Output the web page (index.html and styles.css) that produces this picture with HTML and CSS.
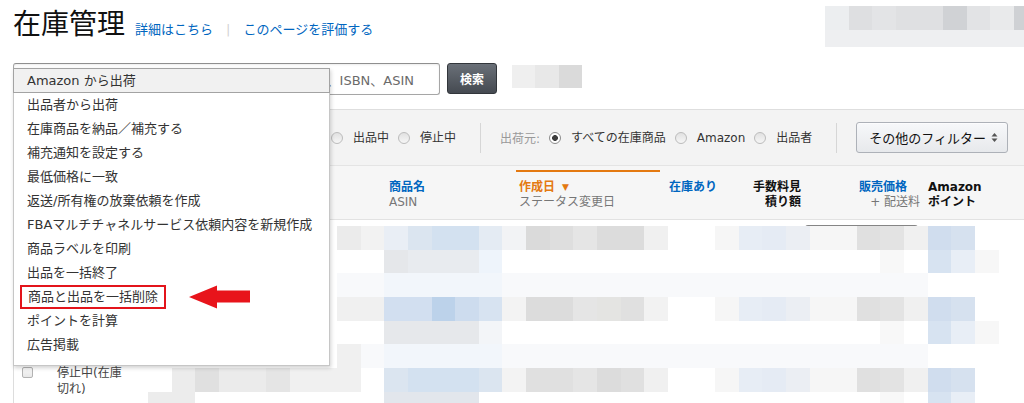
FILE: index.html
```html
<!DOCTYPE html>
<html lang="ja">
<head>
<meta charset="utf-8">
<title>在庫管理</title>
<link rel="stylesheet" href="styles.css">
</head>
<body>
<div class="page">
  <header class="top">
    <div class="title-group">
      <h1 class="title">在庫管理</h1>
      <a class="title-link first" href="#">詳細はこちら</a>
      <span class="title-sep">|</span>
      <a class="title-link" href="#">このページを評価する</a>
    </div>
    <div class="mosaic mosaic-top" data-cols="9" data-rows="MNOPPQRST|UUUUUUUUU"></div>
  </header>

  <div class="search-row">
    <div class="search-box"><span>、ISBN、ASIN</span></div>
    <button class="search-btn" type="button">検索</button>
    <div class="mosaic mosaic-search" data-cols="3" data-rows="VWh"></div>
  </div>

  <section class="inventory">
    <div class="filters">
      <div class="filter-lead">
        <span class="radio on"></span>
      </div>
      <label class="opt"><span class="radio"></span>出品中</label>
      <label class="opt"><span class="radio"></span>停止中</label>
      <span class="vsep"></span>
      <span class="filter-label">出荷元:</span>
      <label class="opt"><span class="radio on"></span>すべての在庫商品</label>
      <label class="opt"><span class="radio"></span>Amazon</label>
      <label class="opt"><span class="radio"></span>出品者</label>
      <span class="vsep"></span>
      <button class="more-btn" type="button">その他のフィルター<svg class="updown" width="7" height="11" viewBox="0 0 7 11"><polygon points="0.5,4.5 3.5,1 6.5,4.5"/><polygon points="0.5,6.5 3.5,10 6.5,6.5"/></svg></button>
    </div>

    <div class="thead">
      <div class="th"><span class="checkbox"></span></div>
      <div class="th"></div>
      <div class="th"></div>
      <div class="th"><div class="strong-link">商品名</div><div class="sub">ASIN</div></div>
      <div class="th sorted"><div class="sort-head">作成日<span class="caret">▼</span></div><div class="sub">ステータス変更日</div></div>
      <div class="th"><div class="strong-link">在庫あり</div></div>
      <div class="th th-fee"><div class="fee">手数料見積り額</div></div>
      <div class="th th-price"><div class="strong-link price-head">販売価格</div><div class="sub">+ 配送料</div></div>
      <div class="th th-points"><div class="strong">Amazon</div><div class="strong">ポイント</div></div>
    </div>

    <div class="tbody">
      <div class="trow">
        <div class="td td-check"><span class="checkbox"></span></div>
        <div class="td td-price"><div class="price-input"></div></div>
      </div>
      <div class="trow">
        <div class="td td-check"><span class="checkbox"></span></div>
      </div>
      <div class="trow">
        <div class="td td-check"><span class="checkbox"></span></div>
        <div class="td td-status">停止中(在庫切れ)</div>
      </div>
      <div class="mosaic mosaic-body" data-cols="37" data-rows="........abcdeefghijkkl..mnopmmqrlst..|..........uvvvw................x.yzL.|........AABBBBBAAAAAAAAAAAAAAAAAA....|........llCCDEyFkkjGqb..mnopmmqrlst..|..........HHHHI................x.yzL.|........lABBBBBAAAAAAAAAAAAAAAAAA....|.Kqaajlll.deeedFqqjkql..mnopmmqrlst..|KK........JJJJ.................x.yz.."></div>
    </div>
  </section>

  <ul class="menu">
    <li class="menu-item active">Amazon から出荷</li>
    <li class="menu-item">出品者から出荷</li>
    <li class="menu-item">在庫商品を納品／補充する</li>
    <li class="menu-item">補充通知を設定する</li>
    <li class="menu-item">最低価格に一致</li>
    <li class="menu-item">返送/所有権の放棄依頼を作成</li>
    <li class="menu-item">FBAマルチチャネルサービス依頼内容を新規作成</li>
    <li class="menu-item">商品ラベルを印刷</li>
    <li class="menu-item">出品を一括終了</li>
    <li class="menu-item marked"><span class="annot">商品と出品を一括削除</span><svg class="arrow" width="62" height="24" viewBox="0 0 62 24"><polygon points="0,12 28,0.5 28,5.5 61,5.5 61,17.5 28,17.5 28,23.5"/></svg></li>
    <li class="menu-item">ポイントを計算</li>
    <li class="menu-item">広告掲載</li>
  </ul>
</div>
<script src="mosaic.js"></script>
</body>
</html>
```

FILE: styles.css
```css
* { box-sizing: border-box; }
html, body { margin: 0; padding: 0; }
body {
  font-family: "DejaVu Sans", "Noto Sans CJK JP", sans-serif;
  color: #333;
  background: #fff;
}
.page {
  position: relative;
  width: 1024px;
  height: 403px;
  overflow: hidden;
  padding-left: 13px;
}

/* header */
.top { height: 63px; display: flex; align-items: flex-start; }
.title-group { display: flex; align-items: baseline; margin-top: 5px; }
.title {
  margin: 0;
  font-family: "Noto Sans CJK JP", sans-serif;
  font-size: 28px;
  font-weight: 400;
  line-height: 34px;
  color: #111;
}
.title-link {
  font-family: "Noto Sans CJK JP", sans-serif;
  font-size: 13px;
  color: #0066c0;
  text-decoration: none;
}
.title-link.first { margin-left: 10px; }
.title-sep { margin: 0 13px; color: #d3d3d3; font-size: 13px; }

.mosaic { display: grid; }
.mosaic i { display: block; }
.mosaic-top {
  margin: 6px 0 0 auto;
  grid-template-columns: repeat(8, 23.6px) 10.2px;
  grid-template-rows: 24px 17px;
}

/* search */
.search-row { display: flex; align-items: flex-start; height: 32px; }
.search-box {
  width: 427px;
  height: 32px;
  border: 1px solid #a6a6a6;
  border-top-color: #8f8f8f;
  border-radius: 3px;
  box-shadow: inset 0 1px 2px rgba(0,0,0,0.08);
  display: flex;
  align-items: center;
  justify-content: flex-end;
  padding-right: 25px;
  font-size: 13px;
  color: #6b6b6b;
  white-space: nowrap;
  overflow: hidden;
}
.search-btn {
  margin-left: 7px;
  width: 50px;
  height: 31px;
  border: 1px solid #32363b;
  border-radius: 3px;
  background: linear-gradient(#6a7078, #454a51);
  color: #fff;
  font-family: "Noto Sans CJK JP", sans-serif;
  font-size: 12px;
  font-weight: 700;
  padding: 0;
}
.mosaic-search {
  margin: 2px 0 0 15px;
  grid-template-columns: repeat(3, 23.33px);
  grid-template-rows: 23px;
}

/* filters */
.filters {
  margin-top: 14px;
  height: 56px;
  border-top: 1px solid #dedede;
  border-left: 1px solid #dddddd;
  background: #f3f3f3;
  display: flex;
  align-items: center;
  font-size: 12px;
  color: #333;
  white-space: nowrap;
}
.filter-lead { width: 317px; flex-shrink: 0; display: flex; align-items: center; padding-left: 12px; }
.filter-label { color: #999; margin-right: 9px; }
.opt { display: flex; align-items: center; line-height: 16px; }
.opt + .opt { margin-left: 9px; }
.radio {
  width: 12px;
  height: 12px;
  border-radius: 50%;
  border: 1px solid #bcbcbc;
  background: linear-gradient(#e1e1e1, #f6f6f6);
  margin-right: 10px;
  flex-shrink: 0;
}
.radio.on {
  border-color: #8c8c8c;
  background: radial-gradient(circle, #3d3d3d 0 2.6px, #fff 3.2px);
}
.vsep { width: 1px; height: 30px; background: #d6d6d6; margin: 0 19px 0 24px; flex-shrink: 0; }
.more-btn {
  width: 152px;
  height: 31px;
  flex-shrink: 0;
  border: 1px solid #adb1b8;
  border-radius: 3px;
  background: linear-gradient(#f7f8fa, #e7e9ec);
  box-shadow: 0 1px 0 rgba(255,255,255,0.6) inset;
  display: flex;
  align-items: center;
  justify-content: space-between;
  padding: 0 9px 0 12px;
  font-family: "Noto Sans CJK JP", sans-serif;
  font-size: 13px;
  color: #111;
}
.updown { fill: #555; }

/* table header */
.thead, .trow {
  display: grid;
  grid-template-columns: 36px 90px 243px 130px 150px 77px 66px 118px 1fr;
}
.thead {
  height: 55px;
  padding-top: 4px;
  border-left: 1px solid #dddddd;
  border-top: 1px solid #e4e4e4;
  border-bottom: 1px solid #e2e2e2;
  background: #f6f6f6;
  font-size: 12px;
  line-height: 15px;
}
.th { border-top: 2px solid transparent; padding: 8px 6px 0; white-space: nowrap; }
.th.sorted { border-top-color: #e47911; margin: 0 3px; padding-left: 3px; }
.strong-link { color: #0066c0; font-weight: 700; }
.strong { color: #111; font-weight: 700; }
.sub { color: #767676; }
.sort-head { color: #e47911; font-weight: 700; }
.caret { font-size: 9px; margin-left: 7px; vertical-align: 1px; }
.th-fee { padding-right: 5px; }
.fee { width: 48px; margin-left: auto; text-align: right; white-space: normal; color: #111; font-weight: 700; }
.th-price { text-align: right; padding-right: 4px; }
.price-head { padding-right: 13px; }
.th-points { padding-left: 4px; }

/* table body */
.tbody {
  position: relative;
  height: 183px;
  border-left: 1px solid #dddddd;
}
.trow { height: 71.5px; }
.td-check { grid-column: 1; padding: 4px 0 0 8px; }
.td-status {
  grid-column: 2;
  padding: 2px 0 0 7px;
  width: 80px;
  font-size: 12px;
  line-height: 16px;
  color: #444;
}
.td-price { grid-column: 8; }
.price-input {
  margin: 5px 6px 0 -1px;
  height: 6px;
  border: 1px solid #cfcfcf;
  border-top-color: #858585;
  border-bottom: none;
  border-radius: 3px 3px 0 0;
}
.checkbox {
  display: block;
  width: 11px;
  height: 11px;
  border: 1px solid #b3b3b3;
  border-radius: 2px;
  background: linear-gradient(#f7f7f7, #e8e8e8);
}
.mosaic-body {
  position: absolute;
  top: 6px;
  left: 134px;
  grid-template-columns: repeat(37, 23.63px);
  grid-auto-rows: 23.7px;
  pointer-events: none;
}

/* opened dropdown */
.menu {
  position: absolute;
  left: 13px;
  top: 68px;
  width: 317px;
  margin: 0;
  padding: 0 0 8px;
  list-style: none;
  background: #fff;
  border: 1px solid #c6c6c6;
  box-shadow: 1px 2px 4px rgba(0,0,0,0.18);
  font-size: 13px;
  color: #333;
}
.menu-item {
  height: 24px;
  line-height: 24px;
  padding-left: 13px;
  white-space: nowrap;
}
.menu-item.active {
  height: 25px;
  margin: -1px -1px 0;
  border: 1px solid #a3a3a3;
  background: #f1f1f1;
  line-height: 23px;
}
.menu-item.marked { display: flex; align-items: center; }
.annot {
  display: inline-block;
  margin-left: -7px;
  padding: 0 6px;
  border: 2px solid #e3141b;
  line-height: 20px;
}
.arrow { margin-left: 23px; fill: #e8141b; flex-shrink: 0; }
```

FILE: mosaic.js
```js
(function () {
  var PALETTE = {
    a: '#ebebeb', b: '#f2f2f2', c: '#e9eef5', d: '#dbe5f0', e: '#d3e1f0',
    f: '#e4ebf3', g: '#f2f3f5', h: '#dadada', i: '#dedede', j: '#e5e5e5',
    k: '#dcdcdc', l: '#f0f0f0', m: '#f6f6f6', n: '#e7edf5', o: '#e5ebf4',
    p: '#ebeef3', q: '#e0e0e0', r: '#e3e3e3', s: '#d0ddee', t: '#d6e1ef',
    u: '#e5e7ea', v: '#e8ebef', w: '#eef4fb', x: '#f8f8f8', y: '#d7e3f1',
    z: '#e8eef6', A: '#f8f9fb', B: '#f2f6fb', C: '#d2dff0', D: '#bcd2ea',
    E: '#cddcee', F: '#f3f3f3', G: '#e4e4e2', H: '#e6e8eb', I: '#f3f5f8',
    J: '#e2e6ec', K: '#ececec', L: '#f7f7f7', M: '#eceef0', N: '#dedfe1',
    O: '#e3e4e6', P: '#dfe0e2', Q: '#d0d2d5', R: '#e2e3e5', S: '#e9eaeb',
    T: '#cfd1d4', U: '#eeeff1', V: '#efefef', W: '#e8e8e8'
  };
  var boxes = document.querySelectorAll('.mosaic');
  for (var b = 0; b < boxes.length; b++) {
    var box = boxes[b];
    var cols = parseInt(box.getAttribute('data-cols'), 10);
    var rows = box.getAttribute('data-rows').split('|');
    for (var r = 0; r < rows.length; r++) {
      for (var c = 0; c < cols; c++) {
        var ch = rows[r].charAt(c);
        var cell = document.createElement('i');
        if (PALETTE[ch]) cell.style.background = PALETTE[ch];
        box.appendChild(cell);
      }
    }
  }
})();
```
